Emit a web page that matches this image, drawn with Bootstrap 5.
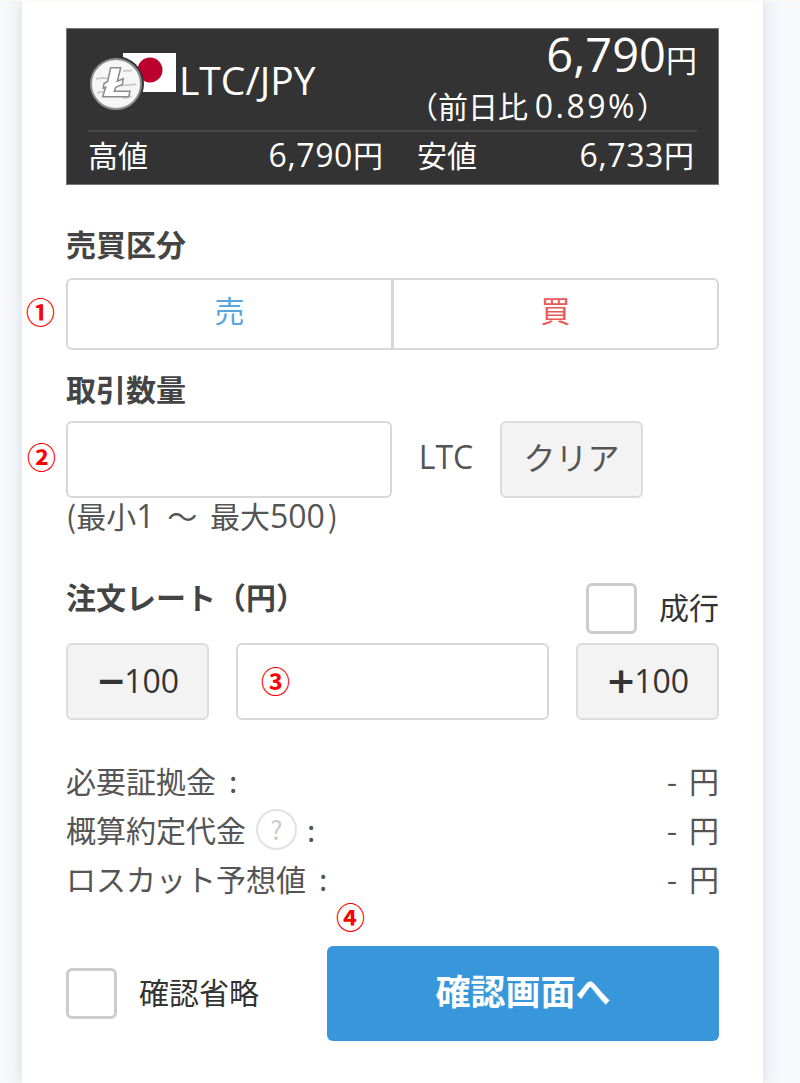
<!DOCTYPE html>
<html lang="ja">

<head>
  <meta charset="UTF-8">
  <title>LTC/JPY 注文</title>
  <link href="https://cdn.jsdelivr.net/npm/bootstrap@5.3.3/dist/css/bootstrap.min.css" rel="stylesheet">
  <style>
    body {
      background: #f6f8fb;
      border-top: 1px solid #fdf8f1;
      font-family: "Noto Sans CJK JP", sans-serif;
      font-size: 30px;
      line-height: 36px;
      color: #555;
    }

    .lat {
      font-family: "Open Sans", "Noto Sans CJK JP", sans-serif;
      font-size: 32px;
    }

    .panel-main {
      position: relative;
      width: 741px;
      min-height: 1082px;
      margin-left: 22px;
      padding: 27px 44px 0;
      background: #fff;
      box-shadow: 0 0 14px rgba(130, 140, 160, .28);
    }

    .quote-box {
      height: 157px;
      padding: 0 21px;
      background: #333;
      color: #fff;
      border: 1px solid #777;
    }

    .quote-top {
      height: 103px;
      border-bottom: 2px solid #484848;
    }

    .pair-name {
      font-family: "Open Sans", sans-serif;
      font-size: 39px;
      margin-left: -1px;
    }

    .price-big {
      font-family: "Open Sans", sans-serif;
      font-size: 47px;
      line-height: 50px;
    }

    .price-big small {
      font-family: "Noto Sans CJK JP", sans-serif;
      font-size: 31px;
    }

    .price-diff {
      margin-top: 3px;
      margin-right: 30px;
    }

    .price-diff .lat {
      letter-spacing: 2.5px;
    }

    .quote-low {
      padding-top: 4px;
      padding-right: 3px;
    }

    .quote-low .lat {
      letter-spacing: .6px;
    }

    .low-cell {
      width: 295px;
    }

    .low-cell-r {
      width: 277px;
      margin-left: 34px;
    }

    .field-title {
      font-weight: 700;
      color: #444;
    }

    .side-group {
      height: 72px;
    }

    .side-group .btn {
      padding: 0 0 10px;
      font-size: 30px;
      background: #fff;
      border: 2px solid #d8d8d8;
      border-radius: 6px;
    }

    .btn.side-sell {
      color: #5aa5dd;
    }

    .btn.side-buy {
      color: #ea5a55;
    }

    .box-input.form-control {
      height: 77px;
      border: 2px solid #d8d8d8;
      border-radius: 6px;
    }

    .qty-input.form-control {
      width: 326px;
    }

    .unit-label {
      width: 108px;
      padding-bottom: 6px;
    }

    .grey-btn.btn {
      width: 143px;
      height: 77px;
      padding: 0 0 8px;
      font-size: 32px;
      color: #555;
      background: #f3f3f3;
      border: 2px solid #dcdcdc;
      border-radius: 6px;
    }

    .step-btn.btn {
      padding: 0 0 2px;
      color: #333;
    }

    .step-sign {
      font-family: "DejaVu Sans", sans-serif;
      font-weight: 700;
      font-size: 36px;
      margin-right: -2px;
    }

    .hint-line {
      margin-top: -1px;
      word-spacing: 6px;
    }

    .hint-end {
      margin-left: 3px;
    }

    .check-square.form-check-input {
      width: 51px;
      height: 51px;
      margin: 0;
      border: 3px solid #ccc;
      border-radius: 6px;
      float: none;
    }

    .help-mark {
      width: 41px;
      height: 41px;
      margin-left: 10px;
      border: 2px solid #e2e2e2;
      border-radius: 50%;
      font-size: 26px;
      line-height: 36px;
      text-align: center;
      color: #ccc;
    }

    .info-row {
      height: 49px;
      line-height: 49px;
    }

    .info-value {
      word-spacing: 5px;
    }

    .colon-mark {
      margin-left: 13px;
    }

    .colon-near {
      margin-left: 10px;
    }

    .confirm-btn.btn {
      width: 392px;
      height: 95px;
      padding: 0 0 6px;
      font-size: 35px;
      font-weight: 700;
      color: #fff;
      background: #3897db;
      border: 0;
      border-radius: 6px;
    }

    .mark-num {
      position: absolute;
      font-family: "Noto Sans CJK JP", sans-serif;
      font-size: 29px;
      line-height: 28px;
      font-weight: 700;
      color: #f00;
    }

    .mt-a { margin-top: 40px; }
    .mb-a { margin-bottom: 17px; }
    .mt-b { margin-top: 20px; }
    .mb-b { margin-bottom: 15px; }
    .mt-c { margin-top: 49px; }
    .mb-c { margin-bottom: 9px; }
    .mt-d { margin-top: 36px; }
    .mt-e { margin-top: 42.5px; }
    .title-up { margin-top: -5px; }
    .gap-rate { gap: 27px; }
    .text-dark2 { color: #333; }
    .gap-chk { gap: 22px; }
    .nudge-a { margin-top: 5px; }
    .nudge-b { margin-bottom: 4px; }
  </style>
</head>

<body>

  <div class="panel-main">

    <div class="quote-box">
      <div class="quote-top d-flex justify-content-between">
        <div class="d-flex align-items-center">
          <svg width="92" height="62" viewBox="0 0 92 62">
            <rect x="35" y="4" width="53" height="39" fill="#fff" />
            <circle cx="62" cy="21" r="12.5" fill="#bc002d" />
            <g transform="translate(-1 0)">
              <circle cx="29" cy="35" r="28" fill="#333" />
              <circle cx="29" cy="35" r="25" fill="#f6f6f6" stroke="#8c8c8c" stroke-width="2" />
              <path d="M9 30c8-3 13 2 22-2M10 44c5-2 8 0 12-1M34 37c5-2 10 0 15-2M36 22c4-1 6 1 9-1M36 49c4-1 6 0 9-2" fill="none" stroke="#cdcdcd" stroke-width="2" />
              <path d="M23.7 18.8h10l-3.4 13.4 6-2.4-1 5.7-6.6 2.7-1.4 4H43l-1.3 5.6h-26l3-9.6-2.4 1 .7-4.7 3.7-2z" fill="#fff" stroke="#8a8a8a" stroke-width="1.5" />
            </g>
          </svg>
          <span class="pair-name">LTC/JPY</span>
        </div>
        <div class="text-end">
          <div class="price-big">6,790<small>円</small></div>
          <div class="price-diff text-nowrap">（前日比 <span class="lat">0.89%</span>）</div>
        </div>
      </div>
      <div class="quote-low d-flex">
        <div class="low-cell d-flex justify-content-between"><span>高値</span><span><span class="lat">6,790</span>円</span></div>
        <div class="low-cell-r d-flex justify-content-between"><span>安値</span><span><span class="lat">6,733</span>円</span></div>
      </div>
    </div>

    <div class="field-title mt-a mb-a">売買区分</div>
    <div class="btn-group side-group d-flex" role="group">
      <button type="button" class="btn side-sell w-50">売</button>
      <button type="button" class="btn side-buy w-50">買</button>
    </div>

    <div class="field-title mt-b mb-b">取引数量</div>
    <div class="d-flex align-items-center">
      <input type="text" class="form-control box-input qty-input flex-grow-0" aria-label="取引数量">
      <div class="unit-label text-center lat">LTC</div>
      <button type="button" class="btn grey-btn">クリア</button>
    </div>
    <div class="hint-line">(最小<span class="lat">1</span> ～ 最大<span class="lat">500</span><span class="hint-end">)</span></div>

    <div class="d-flex justify-content-between mt-c mb-c">
      <div class="field-title title-up">注文レート（円）</div>
      <div class="d-flex align-items-start gap-chk">
        <input type="checkbox" class="form-check-input check-square" aria-label="成行">
        <span class="text-dark2 nudge-a">成行</span>
      </div>
    </div>
    <div class="d-flex gap-rate">
      <button type="button" class="btn grey-btn step-btn flex-shrink-0"><span class="step-sign">−</span><span class="lat">100</span></button>
      <input type="text" class="form-control box-input" aria-label="注文レート">
      <button type="button" class="btn grey-btn step-btn flex-shrink-0"><span class="step-sign">+</span><span class="lat">100</span></button>
    </div>

    <div class="mt-d">
      <div class="info-row d-flex justify-content-between"><span>必要証拠金<span class="colon-mark">:</span></span><span class="info-value">- 円</span></div>
      <div class="info-row d-flex justify-content-between">
        <span class="d-flex align-items-center">概算約定代金<span class="help-mark">?</span><span class="colon-near">:</span></span><span class="info-value">- 円</span>
      </div>
      <div class="info-row d-flex justify-content-between"><span>ロスカット予想値<span class="colon-mark">:</span></span><span class="info-value">- 円</span></div>
    </div>

    <div class="d-flex justify-content-between align-items-center mt-e">
      <div class="d-flex align-items-center gap-chk">
        <input type="checkbox" class="form-check-input check-square" aria-label="確認省略">
        <span class="text-dark2 nudge-b">確認省略</span>
      </div>
      <button type="button" class="btn confirm-btn">確認画面へ</button>
    </div>

    <!-- annotation marks on top of the form -->
    <span class="mark-num" style="left:4px;top:296px">①</span>
    <span class="mark-num" style="left:5px;top:441px">②</span>
    <span class="mark-num" style="left:239px;top:665px">③</span>
    <span class="mark-num" style="left:314px;top:901px">④</span>
  </div>

  <script src="https://cdn.jsdelivr.net/npm/bootstrap@5.3.3/dist/js/bootstrap.bundle.min.js"></script>
</body>

</html>
